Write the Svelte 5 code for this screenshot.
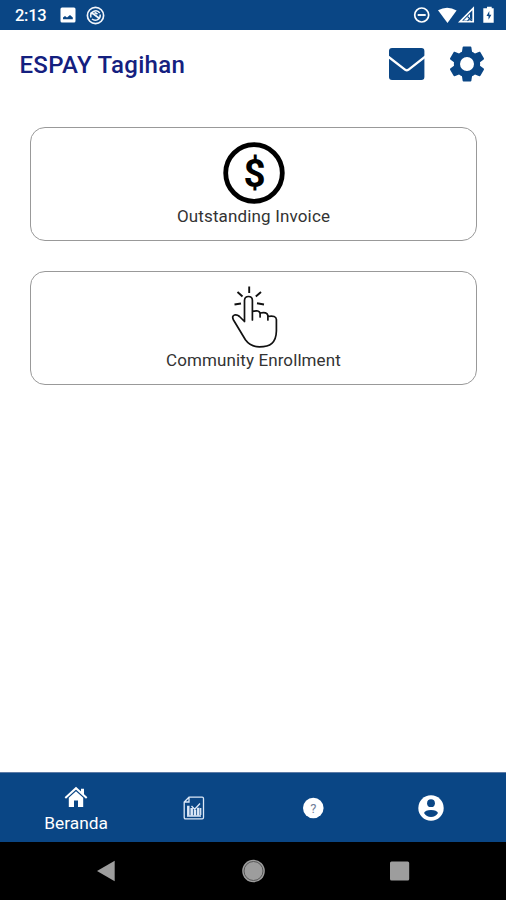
<script>
  const cards = [
    { label: 'Outstanding Invoice', icon: 'dollar' },
    { label: 'Community Enrollment', icon: 'tap' },
  ];
</script>

<div class="screen">
  <div class="status">
    <span class="time">2:13</span>
    <svg class="picture" width="16" height="16" viewBox="0 0 16 16">
      <rect x="0.5" y="0.5" width="15" height="15" rx="1.5" fill="#fff" />
      <path d="M3 12.300V10.500l2-1.500 2 1.500 3-2.500 2.800 2.500v1.800z" fill="#0a4685" />
    </svg>
    <svg class="sync" width="19" height="19" viewBox="0 0 19 19" fill="none" stroke="#f2f5fb">
      <circle cx="9.500" cy="9.500" r="8.100" stroke-width="1.700" />
      <path d="M5 11.500A5 5 0 0 1 13.800 7M14.200 8.500A5 5 0 0 1 6 13" stroke-width="1.500" />
      <path d="M4.500 6.800 7.500 8l6 4.500M8.500 6.500 11.500 8" stroke-width="1.800" />
    </svg>
    <span class="grow"></span>
    <svg width="86" height="20" viewBox="0 0 86 20">
      <circle cx="8.700" cy="10" r="7" fill="none" stroke="#fff" stroke-width="1.700" />
      <path d="M4.700 10h8" stroke="#fff" stroke-width="1.900" />
      <path d="M25 5.300q9.300-5.400 18.600.2L34.500 18.100z" fill="#fff" />
      <path d="M47 16.600 60.200 3.200v13.400z" fill="none" stroke="#fff" stroke-width="1.700" />
      <path d="M50.500 15.500 57 9v3.500l2 3z" fill="#fff" />
      <path d="m54.500 11.500 4.300 4.300m0-4.300-4.300 4.300" stroke="#0a4685" stroke-width="1.100" />
      <path d="M72 3.200h2V1.700h4.700v1.500h2v14.600H70.300V3.200z" fill="#fff" />
      <path d="m76.300 6-2.800 5h2v3.800l2.900-5.100h-2.100z" fill="#0a4685" />
    </svg>
  </div>

  <header>
    <h1>ESPAY Tagihan</h1>
    <svg class="mail" width="38" height="34" viewBox="0 0 38 34">
      <path d="M4 1h29.400a3 3 0 0 1 3 3v26a3 3 0 0 1-3 3H4a3 3 0 0 1-3-3V4a3 3 0 0 1 3-3z" fill="#0a4685" />
      <path d="M0 9.500 17.300 22.800q1.500 1.100 3 0L37.500 9.500" fill="none" stroke="#fff" stroke-width="2.300" />
    </svg>
    <svg class="gear" width="42" height="42" viewBox="0 0 24 24">
      <path fill="#0a4685" fill-rule="evenodd" d="M19.430 12.980c.04-.32.07-.64.07-.98s-.03-.66-.07-.98l2.110-1.650c.19-.15.24-.42.12-.64l-2-3.460c-.12-.22-.39-.3-.61-.22l-2.490 1c-.52-.4-1.080-.73-1.690-.98l-.38-2.650C14.460 2.180 14.250 2 14 2h-4c-.25 0-.46.18-.49.42l-.38 2.650c-.61.25-1.170.59-1.690.98l-2.490-1c-.23-.09-.49 0-.61.22l-2 3.460c-.13.22-.07.49.12.64l2.110 1.650c-.04.32-.07.65-.07.98s.03.66.07.98l-2.110 1.650c-.19.15-.24.42-.12.64l2 3.460c.12.22.39.3.61.22l2.490-1c.52.4 1.080.73 1.690.98l.38 2.650c.03.24.24.42.49.42h4c.25 0 .46-.18.49-.42l.38-2.650c.61-.25 1.170-.59 1.690-.98l2.490 1c.23.09.49 0 .61-.22l2-3.460c.12-.22.07-.49-.12-.64l-2.110-1.650zM12 16a4 4 0 1 1 0-8 4 4 0 0 1 0 8z" />
    </svg>
  </header>

  <main>
    {#each cards as card}
      <section class="card">
        {#if card.icon === 'dollar'}
          <svg width="62" height="62" viewBox="0 0 62 62">
            <circle cx="31" cy="31" r="28.300" fill="none" stroke="#000" stroke-width="4.800" />
            <text x="31.500" y="44.500" class="sign">$</text>
          </svg>
        {:else}
          <svg width="62" height="62" viewBox="0 0 62 62" fill="none" stroke="#111" stroke-linecap="round" stroke-linejoin="round">
            <path stroke-width="1.700" d="M21.500 35.500V14.500Q21.600 10.500 25.500 10.500T29.400 14.500V34M29.400 25.500q7-2 7.700 2V31M37.100 27q7-1.600 7.800 2.500V34M44.900 30.500q8.200-1.400 8.500 3V45q-.2 8.500-4.500 12.300-4 3.500-12.500 3.500-9 0-14-7L10.500 34q-2-4 1-5 2.500-.7 5 1.500l5 5" />
            <path stroke-width="1.900" stroke-linecap="butt" d="M26.200.5V7M14.500 6l5 4.500M38 6l-5.200 4.500M11.500 18.500l6.500-1M34 17.300l7 1.200" />
          </svg>
        {/if}
        <p class={card.icon}>{card.label}</p>
      </section>
    {/each}
  </main>

  <nav>
    <div class="tab home">
      <svg width="24" height="22" viewBox="0 0 24 22">
        <path d="M1.300 12 12 2.200 22.700 12" fill="none" stroke="#fff" stroke-width="2" />
        <path d="M17 2.800h3V9l-3-2.600zM4.800 11.700 12 5.200l7.200 6.500v9.300H14v-6.400h-4V21H4.800z" fill="#fff" />
      </svg>
      <span>Beranda</span>
    </div>
    <div class="tab">
      <svg width="22" height="24" viewBox="0 0 22 24" fill="none" stroke="#dce8f7">
        <path d="M6 1.200h13.200q1.300 0 1.300 1.300v19q0 1.300-1.300 1.300H2.500q-1.300 0-1.300-1.300V6zM6 1.200V6H1.200" stroke-width="1.300" />
        <path d="M5.300 19.800v-10M8.700 19.800V12M12 19.800v-6M15.300 19.800v-8" stroke-width="2.500" />
        <path d="m8.500 10 3.200 3.300L17 7.500M4 20h14M17.700 12v7" stroke-width="1.300" />
      </svg>
    </div>
    <div class="tab">
      <svg width="22" height="22" viewBox="0 0 22 22">
        <circle cx="11.300" cy="11" r="10.300" fill="#fff" />
        <text x="11.300" y="16" class="question">?</text>
      </svg>
    </div>
    <div class="tab">
      <svg width="26" height="28" viewBox="0 0 26 28">
        <circle cx="13" cy="14" r="12.700" fill="#fff" />
        <circle cx="13" cy="9.200" r="3.900" fill="#0a4685" />
        <path d="M6 18.900q1.200-3 7-3t7 3Q17.500 23 13 23t-7-4.100z" fill="#0a4685" />
      </svg>
    </div>
  </nav>

  <footer>
    <svg width="20" height="22" viewBox="0 0 20 22"><path d="M1 11 18.700.8v20.400z" fill="#9d9d9d" /></svg>
    <svg width="24" height="24" viewBox="0 0 24 24">
      <circle cx="12.500" cy="12" r="11.300" fill="#9d9d9d" />
      <circle cx="12.500" cy="12" r="9.500" fill="none" stroke="#555" stroke-width="1" />
    </svg>
    <svg width="20" height="20" viewBox="0 0 20 20"><rect x="0" y=".5" width="19.200" height="19" rx="1.500" fill="#9d9d9d" /></svg>
  </footer>
</div>

<style>
  .screen {
    width: 506px;
    height: 900px;
    display: flex;
    flex-direction: column;
    background: #fff;
    font-family: Roboto, sans-serif;
    overflow: hidden;
  }
  svg { display: block; flex: none; }
  .status {
    height: 30px;
    box-sizing: border-box;
    flex: none;
    display: flex;
    align-items: center;
    padding: 0 7px 0 15px;
    background: #0a4685;
    color: #fff;
  }
  .time {
    width: 45px;
    padding-top: 2px;
    font-size: 16.500px;
    font-weight: 500;
    letter-spacing: -0.3px;
    line-height: 28px;
  }
  .picture { margin-right: 10px; }
  .grow { flex: 1; }
  header {
    height: 97px;
    box-sizing: border-box;
    flex: none;
    display: flex;
    align-items: flex-start;
    padding: 13px 18px 0 19.500px;
  }
  h1 {
    flex: 1;
    margin: 7px 0 0;
    font-size: 24px;
    font-weight: 500;
    letter-spacing: 0.310px;
    line-height: 30px;
    color: #14207f;
    white-space: nowrap;
  }
  .mail { margin: 4px 20px 0 0; }
  main {
    flex: 1;
    display: flex;
    flex-direction: column;
    gap: 30px;
    padding: 0 29px 0 30px;
  }
  .card {
    height: 114px;
    box-sizing: border-box;
    display: flex;
    flex-direction: column;
    align-items: center;
    padding-top: 14px;
    border: 1px solid #999;
    border-radius: 15px;
  }
  .card p {
    margin: 2px 0 0;
    font-size: 17px;
    line-height: 20px;
    color: #333;
    white-space: nowrap;
  }
  .card .dollar { letter-spacing: 0.150px; }
  .card .tap { letter-spacing: 0.100px; }
  .sign {
    font-size: 38.500px;
    font-weight: 700;
    text-anchor: middle;
  }
  nav {
    height: 70px;
    box-sizing: border-box;
    flex: none;
    display: flex;
    padding: 0 16px;
    background: #0a4685;
    border-top: 1px solid #5d7ba6;
    color: #fff;
  }
  .tab {
    flex: 1;
    display: flex;
    flex-direction: column;
    align-items: center;
    justify-content: center;
  }
  .home { padding: 4px 0 0 1px; }
  .home span { margin-top: 4px; font-size: 17.300px; line-height: 22px; }
  .question { font-size: 13px; fill: #70809a; text-anchor: middle; }
  footer {
    height: 58px;
    box-sizing: border-box;
    flex: none;
    display: flex;
    align-items: center;
    justify-content: space-between;
    padding: 0 96px;
    background: #000;
  }
</style>
